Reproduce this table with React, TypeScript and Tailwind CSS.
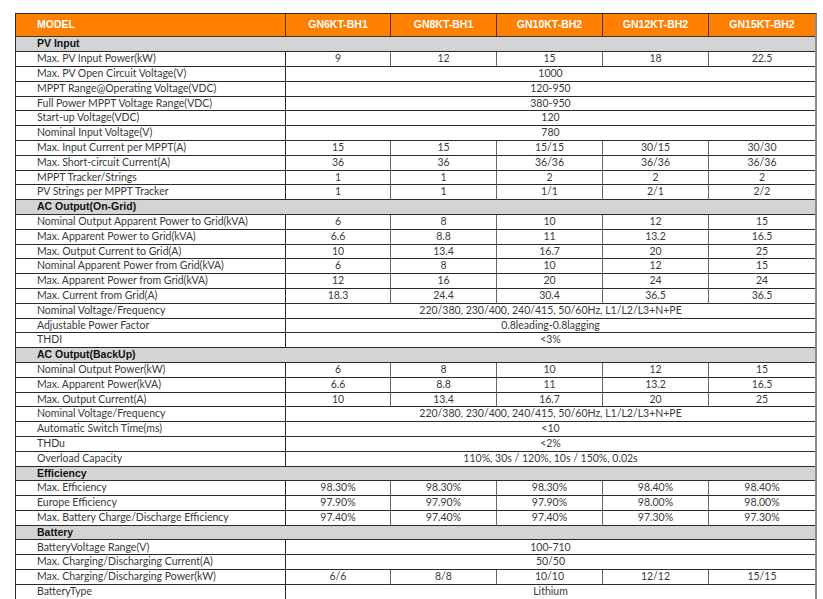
import React from "react";

type Row =
  | { s: string }
  | { l: string; v: string | string[] };

const rows: Row[] = [
  { s: "PV Input" },
  { l: "Max. PV Input Power(kW)", v: ["9", "12", "15", "18", "22.5"] },
  { l: "Max. PV Open Circuit Voltage(V)", v: "1000" },
  { l: "MPPT Range@Operating Voltage(VDC)", v: "120-950" },
  { l: "Full Power MPPT Voltage Range(VDC)", v: "380-950" },
  { l: "Start-up Voltage(VDC)", v: "120" },
  { l: "Nominal Input Voltage(V)", v: "780" },
  { l: "Max. Input Current per MPPT(A)", v: ["15", "15", "15/15", "30/15", "30/30"] },
  { l: "Max. Short-circuit Current(A)", v: ["36", "36", "36/36", "36/36", "36/36"] },
  { l: "MPPT Tracker/Strings", v: ["1", "1", "2", "2", "2"] },
  { l: "PV Strings per MPPT Tracker", v: ["1", "1", "1/1", "2/1", "2/2"] },
  { s: "AC Output(On-Grid)" },
  { l: "Nominal Output Apparent Power to Grid(kVA)", v: ["6", "8", "10", "12", "15"] },
  { l: "Max. Apparent Power to Grid(kVA)", v: ["6.6", "8.8", "11", "13.2", "16.5"] },
  { l: "Max. Output Current to Grid(A)", v: ["10", "13.4", "16.7", "20", "25"] },
  { l: "Nominal Apparent Power from Grid(kVA)", v: ["6", "8", "10", "12", "15"] },
  { l: "Max. Apparent Power from Grid(kVA)", v: ["12", "16", "20", "24", "24"] },
  { l: "Max. Current from Grid(A)", v: ["18.3", "24.4", "30.4", "36.5", "36.5"] },
  { l: "Nominal Voltage/Frequency", v: "220/380, 230/400, 240/415, 50/60Hz, L1/L2/L3+N+PE" },
  { l: "Adjustable Power Factor", v: "0.8leading-0.8lagging" },
  { l: "THDI", v: "<3%" },
  { s: "AC Output(BackUp)" },
  { l: "Nominal Output Power(kW)", v: ["6", "8", "10", "12", "15"] },
  { l: "Max. Apparent Power(kVA)", v: ["6.6", "8.8", "11", "13.2", "16.5"] },
  { l: "Max. Output Current(A)", v: ["10", "13.4", "16.7", "20", "25"] },
  { l: "Nominal Voltage/Frequency", v: "220/380, 230/400, 240/415, 50/60Hz, L1/L2/L3+N+PE" },
  { l: "Automatic Switch Time(ms)", v: "<10" },
  { l: "THDu", v: "<2%" },
  { l: "Overload Capacity", v: "110%, 30s / 120%, 10s / 150%, 0.02s" },
  { s: "Efficiency" },
  { l: "Max. Efficiency", v: ["98.30%", "98.30%", "98.30%", "98.40%", "98.40%"] },
  { l: "Europe Efficiency", v: ["97.90%", "97.90%", "97.90%", "98.00%", "98.00%"] },
  { l: "Max. Battery Charge/Discharge Efficiency", v: ["97.40%", "97.40%", "97.40%", "97.30%", "97.30%"] },
  { s: "Battery" },
  { l: "BatteryVoltage Range(V)", v: "100-710" },
  { l: "Max. Charging/Discharging Current(A)", v: "50/50" },
  { l: "Max. Charging/Discharging Power(kW)", v: ["6/6", "8/8", "10/10", "12/12", "15/15"] },
  { l: "BatteryType", v: "Lithium" },
];

const models = ["GN6KT-BH1", "GN8KT-BH1", "GN10KT-BH2", "GN12KT-BH2", "GN15KT-BH2"];

const body = "font-['Lato','Open_Sans',sans-serif] text-[10.5px] text-[#3a3a3a]";

export default function App() {
  return (
    <div className="w-[823px] h-[599px] overflow-hidden bg-white pt-[13px] pl-[15px]">
      <div className="grid w-[802px] grid-cols-[270px_105px_106px_106px_106px_106px] grid-rows-[23.4px] auto-rows-[14.8px] border-t border-l border-[#2a2a2a] border-r-2 border-r-[#8a8a8a]">
        <div className="bg-[#ff8000] border-r border-b border-[#4a3520] flex items-center pl-[21px] font-['Liberation_Sans',Arial,sans-serif] font-bold text-[10.5px] text-white">
          MODEL
        </div>
        {models.map((m, i) => (
          <div
            key={m}
            className={`bg-[#ff8000] border-b border-[#4a3520] flex items-center justify-center font-['Liberation_Sans',Arial,sans-serif] font-bold text-[10.5px] text-white ${i < 4 ? "border-r" : ""}`}
          >
            {m}
          </div>
        ))}
        {rows.map((r, idx) => {
          if ("s" in r) {
            return (
              <div
                key={idx}
                className="col-span-6 bg-[#d4d4d4] border-b border-[#2a2a2a] flex items-center pl-[21px] font-['Liberation_Sans',Arial,sans-serif] font-bold text-[10.5px] text-[#111]"
              >
                {r.s}
              </div>
            );
          }
          return (
            <React.Fragment key={idx}>
              <div className={`border-r border-b border-[#2a2a2a] flex items-center pl-[21px] whitespace-nowrap ${body}`}>
                {r.l}
              </div>
              {typeof r.v === "string" ? (
                <div className={`col-span-5 border-b border-[#2a2a2a] flex items-center justify-center whitespace-nowrap ${body}`}>
                  {r.v}
                </div>
              ) : (
                r.v.map((v, j) => (
                  <div
                    key={j}
                    className={`border-b border-[#2a2a2a] flex items-center justify-center ${j < 4 ? "border-r border-r-[#666]" : ""} ${body}`}
                  >
                    {v}
                  </div>
                ))
              )}
            </React.Fragment>
          );
        })}
      </div>
    </div>
  );
}
